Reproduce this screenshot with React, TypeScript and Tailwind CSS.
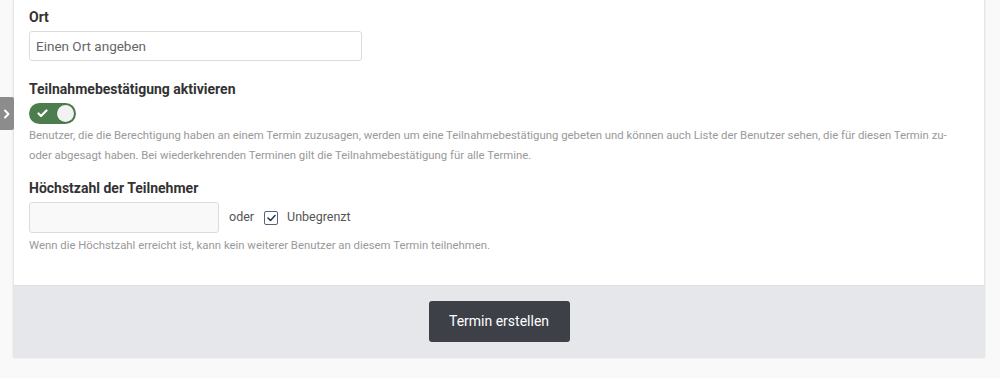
import { useState } from 'react';

export default function App() {
  const [attend, setAttend] = useState(true);
  const [unlimited, setUnlimited] = useState(true);

  return (
    <div className="relative min-h-[378px] bg-[#f9f9f9] font-['Roboto',sans-serif] text-[#333]">
      {/* Sidebar toggle */}
      <div className="absolute left-0 top-[97px] flex h-[33px] w-[14px] items-center justify-center rounded-r-[2px] bg-[#8c8c8c]">
        <svg width="8" height="10" viewBox="0 0 8 10" fill="none">
          <path d="M2 1.5 5.5 5 2 8.5" stroke="#fff" strokeWidth="2" strokeLinecap="round" strokeLinejoin="round" />
        </svg>
      </div>

      <div className="ml-[13px] mr-[15px] border-x border-[#e6e6e6] bg-white shadow-[0_1px_2px_rgba(0,0,0,0.1)]">
        <div className="px-[15px] pt-[7px] pb-[30px]">
          {/* Ort */}
          <label className="block text-[14px] font-bold leading-[20px] text-[#333]">Ort</label>
          <input
            type="text"
            placeholder="Einen Ort angeben"
            className="mt-[4px] block h-[30px] w-[333px] rounded-[3px] border border-[#dcdcdc] px-[6px] text-[13.5px] text-[#555] placeholder:text-[#666] outline-none"
          />

          {/* Teilnahmebestätigung */}
          <label className="mt-[18px] block text-[14px] font-bold leading-[20px] text-[#333]">
            Teilnahmebestätigung aktivieren
          </label>
          <button
            type="button"
            onClick={() => setAttend(!attend)}
            className={`mt-[4px] flex h-[21px] w-[47px] items-center rounded-full px-[2px] ${attend ? 'justify-end bg-[#4c7d4e]' : 'justify-start bg-[#ccc]'}`}
          >
            {attend && (
              <svg width="11" height="9" viewBox="0 0 11 9" className="mr-[9px]" fill="none">
                <path d="M1.5 4.5 4 7 9.5 1.5" stroke="#fff" strokeWidth="2.2" strokeLinecap="round" strokeLinejoin="round" />
              </svg>
            )}
            <span className="h-[17px] w-[17px] rounded-full bg-[#f2f2f2] shadow-[0_0_1px_rgba(0,0,0,0.3)]" />
          </button>
          <p className="mt-[1px] text-[11.35px] leading-[20px] text-[#999]">
            Benutzer, die die Berechtigung haben an einem Termin zuzusagen, werden um eine Teilnahmebestätigung gebeten und können auch Liste der Benutzer sehen, die für diesen Termin zu-
            <br />
            oder abgesagt haben. Bei wiederkehrenden Terminen gilt die Teilnahmebestätigung für alle Termine.
          </p>

          {/* Höchstzahl */}
          <label className="mt-[13px] block text-[14px] font-bold leading-[20px] text-[#333]">
            Höchstzahl der Teilnehmer
          </label>
          <div className="mt-[4px] flex items-center">
            <input
              type="text"
              className="block h-[31px] w-[190px] rounded-[3px] border border-[#dcdcdc] bg-[#f9f9f9] px-[6px] text-[13px] outline-none"
            />
            <span className="ml-[10px] text-[12.5px] text-[#555]">oder</span>
            <button
              type="button"
              onClick={() => setUnlimited(!unlimited)}
              className="ml-[10px] flex h-[14px] w-[14px] items-center justify-center rounded-[2px] border-[1.5px] border-[#56637f] bg-white"
            >
              {unlimited && (
                <svg width="9" height="8" viewBox="0 0 9 8" fill="none">
                  <path d="M1 4 3.5 6.5 8 1.5" stroke="#2d3a55" strokeWidth="1.6" strokeLinecap="round" strokeLinejoin="round" />
                </svg>
              )}
            </button>
            <span className="ml-[9px] text-[12.5px] text-[#555]">Unbegrenzt</span>
          </div>
          <p className="mt-[2px] text-[11.35px] leading-[20px] text-[#999]">
            Wenn die Höchstzahl erreicht ist, kann kein weiterer Benutzer an diesem Termin teilnehmen.
          </p>
        </div>

        {/* Footer */}
        <div className="flex justify-center border-t border-[#dedfe2] bg-[#e6e7ea] pt-[15px] pb-[15px]">
          <button
            type="button"
            className="h-[41px] w-[141px] rounded-[3px] bg-[#3e4047] text-[14px] font-normal text-white"
          >
            Termin erstellen
          </button>
        </div>
      </div>
    </div>
  );
}
